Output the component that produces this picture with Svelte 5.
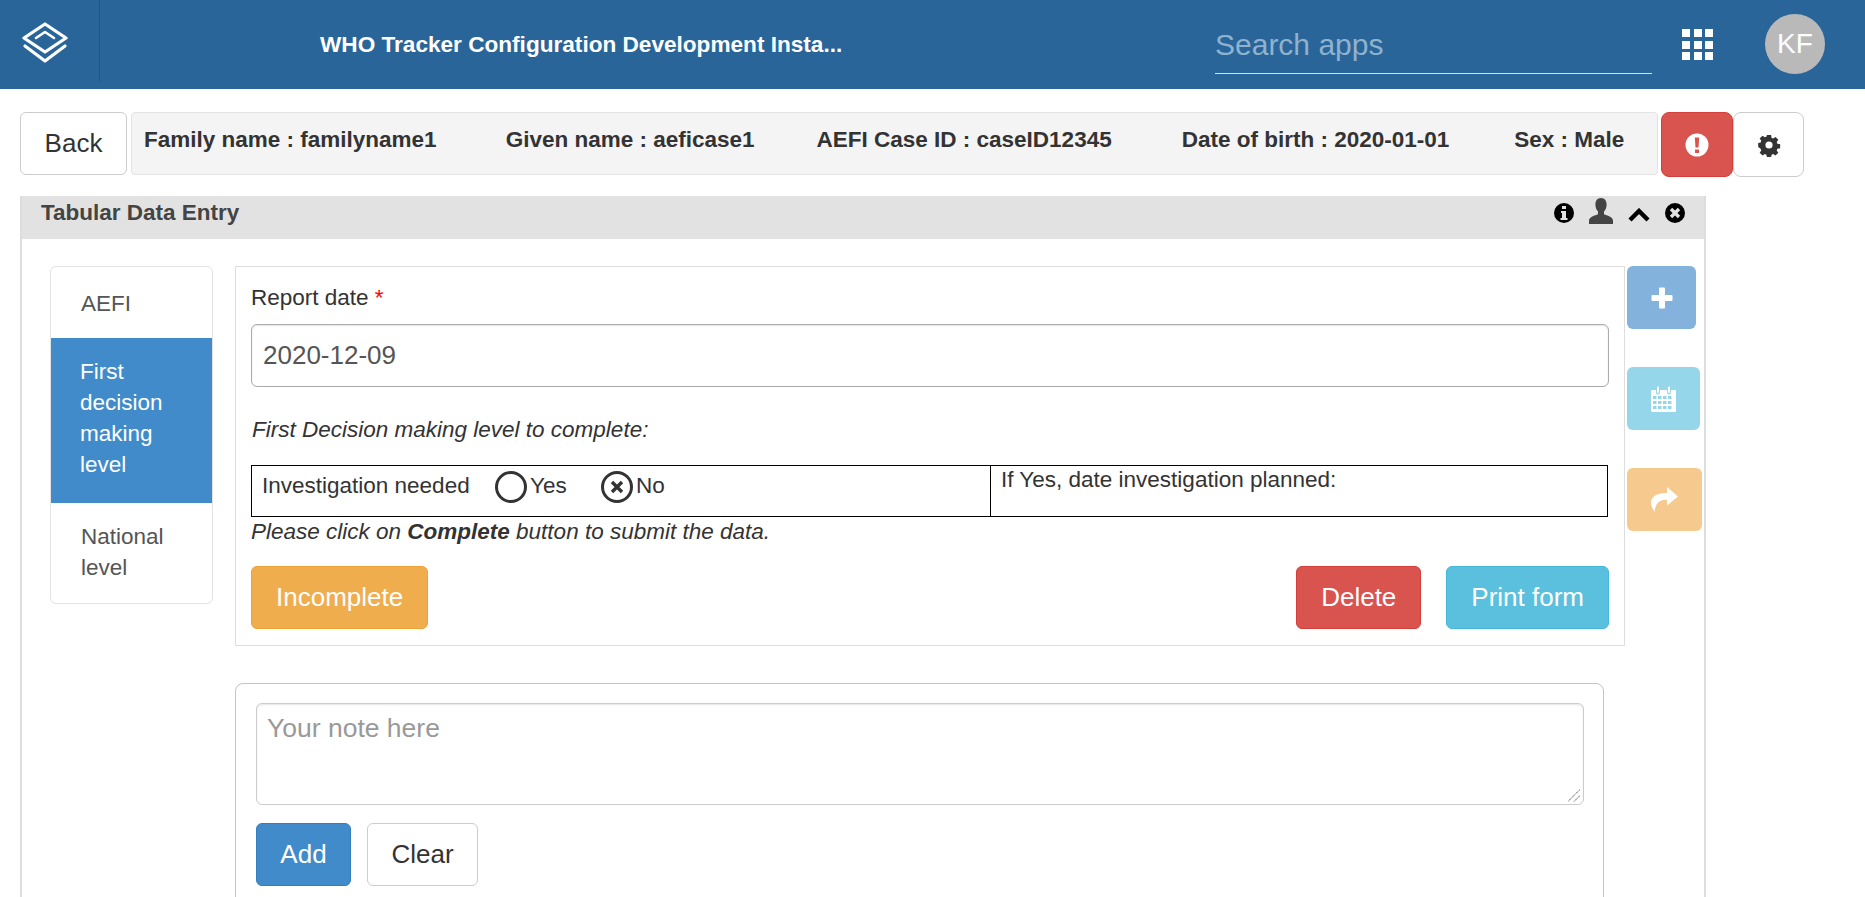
<script lang="ts">
	const patient = [
		{ label: 'Family name', value: 'familyname1' },
		{ label: 'Given name', value: 'aeficase1' },
		{ label: 'AEFI Case ID', value: 'caseID12345' },
		{ label: 'Date of birth', value: '2020-01-01' },
		{ label: 'Sex', value: 'Male' }
	];
	const stages = [
		{ name: 'AEFI', active: false },
		{ name: 'First decision making level', active: true },
		{ name: 'National level', active: false }
	];
</script>

<header class="topbar">
	<div class="logoCell">
		<svg class="logo" viewBox="0 0 46 41" fill="none" stroke="#fff" stroke-width="3.2" stroke-linejoin="round" stroke-linecap="round">
			<path d="M23 2 L44 16 L23 30 L2 16 Z" />
			<path d="M14 16 L23 10 L32 16" stroke-width="2.6" />
			<path d="M3 24 L23 39 L43 24" />
		</svg>
	</div>
	<div class="instance">WHO Tracker Configuration Development Insta...</div>
	<div class="search">Search apps</div>
	<div class="appsGrid">
		{#each Array(9) as _}
			<span></span>
		{/each}
	</div>
	<div class="avatar">KF</div>
</header>

<div class="patientRow">
	<button class="btn back">Back</button>
	<div class="patientBar">
		{#each patient as p}
			<span>{p.label} : {p.value}</span>
		{/each}
	</div>
	<button class="btn danger iconBtn" aria-label="warnings">
		<svg viewBox="0 0 24 24" width="24" height="24">
			<circle cx="12" cy="12" r="11.5" fill="#fff" />
			<path d="M9.8 4.5h4.4l-.7 10h-3z M10 16.5h4v3.4h-4z" fill="#d9534f" />
		</svg>
	</button>
	<button class="btn iconBtn gear" aria-label="settings">
		<svg viewBox="0 0 24 24" width="24" height="24">
			<path fill="#333" fill-rule="evenodd" d="M9.7 1h4.6l.6 3.1 1.7.7 2.6-1.8 3.2 3.2-1.8 2.6.7 1.7 3.1.6v4.6l-3.1.6-.7 1.7 1.8 2.6-3.2 3.2-2.6-1.8-1.7.7-.6 3.1H9.7l-.6-3.1-1.7-.7-2.6 1.8-3.2-3.2 1.8-2.6-.7-1.7L0 14.3V9.7l2.7-.6.7-1.7L1.6 4.8l3.2-3.2 2.6 1.8 1.7-.7z M12 8a4 4 0 1 0 0 8 4 4 0 0 0 0-8z" transform="translate(1.2 1.2) scale(.9)" />
		</svg>
	</button>
</div>

<section class="panel">
	<div class="panelHead">
		<span class="panelTitle">Tabular Data Entry</span>
		<div class="panelIcons">
			<svg viewBox="0 0 20 20" width="20" height="20">
				<circle cx="10" cy="10" r="10" fill="#000" />
				<path d="M8 3h4v3H8z M7 8h5v7h1.5v2h-7v-2H8v-5H7z" fill="#e2e2e2" />
			</svg>
			<svg class="person" viewBox="0 0 24 26" width="24" height="26">
				<path d="M12 0c3.6 0 5.6 2.8 5.6 6.4 0 3-1.2 5.6-2.6 7.2v2.6c3 1.2 9 2.6 9 6.4V26H0v-3.4c0-3.8 6-5.2 9-6.4v-2.6C7.600 12 6.400 9.400 6.400 6.400 6.400 2.800 8.400 0 12 0z" fill="#444" />
			</svg>
			<svg class="chev" viewBox="0 0 22 14" width="22" height="14">
				<path d="M2 12 L11 3 L20 12" fill="none" stroke="#000" stroke-width="4.400" />
			</svg>
			<svg viewBox="0 0 20 20" width="20" height="20">
				<circle cx="10" cy="10" r="10" fill="#000" />
				<path d="M6 6 L14 14 M14 6 L6 14" stroke="#e2e2e2" stroke-width="3.400" />
			</svg>
		</div>
	</div>

	<div class="panelBody">
		<nav class="stages">
			{#each stages as s}
				<div class="stage" class:active={s.active}>{s.name}</div>
			{/each}
		</nav>

		<div class="content">
			<div class="formRow">
				<div class="formBox">
					<div class="fieldLabel">Report date <span class="req">*</span></div>
					<div class="input">2020-12-09</div>
					<p class="hint">First Decision making level to complete:</p>
					<table>
						<tbody>
							<tr>
								<td class="left">
									<span class="q">Investigation needed</span>
									<span class="radio"></span><span class="opt">Yes</span>
									<span class="radio checked">
										<svg viewBox="0 0 14 14" width="14" height="14">
											<path d="M2 2 L12 12 M12 2 L2 12" stroke="#333" stroke-width="3.400" />
										</svg>
									</span><span class="opt">No</span>
								</td>
								<td class="right">If Yes, date investigation planned:</td>
							</tr>
						</tbody>
					</table>
					<p class="submitHint">Please click on <b>Complete</b> button to submit the data.</p>
					<div class="formActions">
						<button class="btn warning">Incomplete</button>
						<span class="spacer"></span>
						<button class="btn danger">Delete</button>
						<button class="btn info">Print form</button>
					</div>
				</div>

				<div class="sideActions">
					<button class="side plus" aria-label="add">
						<svg viewBox="0 0 22 22" width="22" height="22">
							<path d="M8 1.500a1 1 0 0 1 1-1h4a1 1 0 0 1 1 1V8h6.500a1 1 0 0 1 1 1v4a1 1 0 0 1-1 1H14v6.500a1 1 0 0 1-1 1H9a1 1 0 0 1-1-1V14H1.500a1 1 0 0 1-1-1V9a1 1 0 0 1 1-1H8z" fill="#fff" />
						</svg>
					</button>
					<button class="side cal" aria-label="schedule">
						<svg viewBox="0 0 25 26" width="25" height="26" fill="#fff">
							<path fill-rule="evenodd" d="M1 4h4v2.500a2 2 0 0 0 4 0V4h7v2.500a2 2 0 0 0 4 0V4h4a1 1 0 0 1 1 1v20a1 1 0 0 1-1 1H1a1 1 0 0 1-1-1V5a1 1 0 0 1 1-1z M2 10v3h3.500v-3z M7 10v3h3.500v-3z M12 10v3h3.500v-3z M17 10v3h3.500v-3z M2 15v3h3.500v-3z M7 15v3h3.500v-3z M12 15v3h3.500v-3z M17 15v3h3.500v-3z M2 20v3h3.500v-3z M7 20v3h3.500v-3z M12 20v3h3.500v-3z M17 20v3h3.500v-3z" />
							<path d="M6 1.500a1 1 0 0 1 2 0V6a1 1 0 0 1-2 0z M17 1.500a1 1 0 0 1 2 0V6a1 1 0 0 1-2 0z" />
						</svg>
					</button>
					<button class="side share" aria-label="refer">
						<svg viewBox="0 0 27 25" width="27" height="25">
							<path d="M16 0 L27 9.500 L16 18.500 V13 C9 12.500 5 15 3.500 24.500 C1 21 0 18 0 15.500 C0 9 7 6 16 6z" fill="#fff" />
						</svg>
					</button>
				</div>
			</div>

			<div class="notes">
				<div class="noteInput">
					<span class="placeholder">Your note here</span>
					<svg class="grip" viewBox="0 0 13 13" width="13" height="13">
						<path d="M0 12.500 L12 .5 M6 12.500 L12 6.500" stroke="#555" stroke-width="1" stroke-dasharray="1.400 .6" fill="none" />
					</svg>
				</div>
				<div class="noteActions">
					<button class="btn primary">Add</button>
					<button class="btn">Clear</button>
				</div>
			</div>
		</div>
	</div>
</section>

<style>
	:global(body) {
		margin: 0;
		height: 897px;
		overflow: hidden;
		background: #fff;
		font-family: 'Liberation Sans', Arial, sans-serif;
		color: #333;
	}

	.topbar {
		height: 89px;
		background: #296598;
		display: flex;
		align-items: flex-start;
		color: #fff;
		box-sizing: border-box;
	}

	.logoCell {
		width: 100px;
		height: 82px;
		box-sizing: border-box;
		border-right: 1px solid #22577f;
		padding: 22px 0 0 22px;
		flex: none;
	}

	.logo {
		width: 46px;
		height: 41px;
		display: block;
	}

	.instance {
		margin: 31px 0 0 220px;
		width: 895px;
		font-size: 22.600px;
		line-height: 28px;
		font-weight: 700;
		white-space: nowrap;
		flex: none;
	}

	.search {
		width: 437px;
		height: 57px;
		margin: 17px 0 0 0;
		flex: none;
		box-sizing: border-box;
		border-bottom: 1px solid #d6e2ec;
		font-size: 30px;
		line-height: 56px;
		color: #8fb2cf;
	}

	.appsGrid {
		width: 31px;
		margin: 29px 0 0 30px;
		flex: none;
		display: grid;
		grid-template-columns: repeat(3, 8px);
		grid-auto-rows: 8px;
		gap: 3.5px;
	}

	.appsGrid span {
		background: #fff;
	}

	.avatar {
		width: 60px;
		height: 60px;
		margin: 14px 0 0 52px;
		flex: none;
		border-radius: 50%;
		background: #b9b9b9;
		font-size: 28px;
		line-height: 60px;
		text-align: center;
	}

	.btn {
		font: inherit;
		font-size: 26px;
		line-height: 35px;
		height: 63px;
		padding: 0 24px;
		border: 1px solid #ccc;
		border-radius: 6px;
		background: #fff;
		color: #333;
		box-sizing: border-box;
	}

	.btn.primary {
		background: #428bca;
		border-color: #357ebd;
		color: #fff;
	}

	.btn.warning {
		background: #f0ad4e;
		border-color: #eea236;
		color: #fff;
	}

	.btn.danger {
		background: #d9534f;
		border-color: #d43f3a;
		color: #fff;
	}

	.btn.info {
		background: #5bc0de;
		border-color: #46b8da;
		color: #fff;
	}

	.patientRow {
		display: flex;
		align-items: flex-start;
		padding: 23px 0 0 20px;
		height: 107px;
		box-sizing: border-box;
	}

	.back {
		width: 107px;
		padding: 0;
		margin-right: 4px;
	}

	.patientBar {
		width: 1527px;
		height: 63px;
		box-sizing: border-box;
		background: #f4f4f4;
		border: 1px solid #e3e3e3;
		border-radius: 4px;
		margin-right: 3px;
		padding: 15px 0 0 12px;
		display: flex;
		font-size: 22.500px;
		line-height: 24px;
		font-weight: 700;
		white-space: nowrap;
	}

	.patientBar span:nth-child(1) {
		margin-right: 69px;
	}

	.patientBar span:nth-child(2) {
		margin-right: 62px;
	}

	.patientBar span:nth-child(3) {
		margin-right: 70px;
	}

	.patientBar span:nth-child(4) {
		margin-right: 65px;
	}

	.iconBtn {
		width: 72px;
		height: 65px;
		padding: 0;
		display: flex;
		align-items: center;
		justify-content: center;
		flex: none;
		border-radius: 8px;
	}

	.gear {
		width: 71px;
	}

	.panel {
		margin-left: 20px;
		width: 1686px;
		height: 701px;
		box-sizing: border-box;
		border: solid #ddd;
		border-width: 0 2px;
		overflow: hidden;
	}

	.panelHead {
		height: 43px;
		background: #e2e2e2;
		display: flex;
		align-items: center;
		justify-content: space-between;
		padding: 0 19px 0 19px;
	}

	.panelTitle {
		font-size: 22.500px;
		font-weight: 700;
		color: #444;
		margin-top: -10px;
	}

	.panelIcons {
		display: flex;
		align-items: center;
		gap: 15px;
		margin-top: -9px;
	}

	.person {
		margin-top: -5px;
	}

	.chev {
		margin-top: 4px;
	}

	.panelBody {
		display: flex;
		align-items: flex-start;
		padding: 27px 0 0 28px;
	}

	.stages {
		width: 163px;
		box-sizing: border-box;
		border: 1px solid #e3e3e3;
		border-radius: 6px;
		overflow: hidden;
		margin-right: 22px;
		flex: none;
	}

	.stage {
		padding: 21px 30px 12px 30px;
		font-size: 22.500px;
		line-height: 31px;
		color: #555;
	}

	.stage:first-child {
		height: 71px;
		box-sizing: border-box;
	}

	.stage.active {
		background: #428bca;
		color: #fff;
		margin: 0 -1px;
		padding: 18px 31px 23px 30px;
	}

	.stage:last-child {
		padding-top: 18px;
		padding-bottom: 20px;
	}

	.formRow {
		display: flex;
		align-items: flex-start;
	}

	.formBox {
		width: 1390px;
		height: 380px;
		box-sizing: border-box;
		border: 1px solid #ddd;
		padding: 17px 15px 0 15px;
		font-size: 22.500px;
		flex: none;
	}

	.fieldLabel {
		line-height: 28px;
		height: 40px;
	}

	.req {
		color: #f00;
	}

	.input {
		height: 63px;
		width: 1358px;
		box-sizing: border-box;
		border: 1px solid #aaa;
		border-radius: 6px;
		box-shadow: inset 0 1px 2px rgba(0, 0, 0, 0.1);
		padding: 0 11px;
		font-size: 26px;
		line-height: 61px;
		color: #555;
	}

	.hint {
		margin: 29px 0 0;
		height: 49px;
		line-height: 28px;
		font-style: italic;
		padding-left: 1px;
	}

	table {
		border-collapse: collapse;
		width: 1357px;
		height: 52px;
		table-layout: fixed;
		font-size: 22.500px;
	}

	td {
		border: 1px solid #000;
		padding: 0 10px;
		vertical-align: top;
	}

	td.left {
		width: 739px;
		box-sizing: border-box;
		line-height: 30px;
		padding-top: 5px;
		white-space: nowrap;
	}

	td.right {
		line-height: 28px;
		padding-top: 0;
	}

	.q {
		margin-right: 19px;
	}

	.radio {
		display: inline-flex;
		align-items: center;
		justify-content: center;
		width: 32px;
		height: 32px;
		box-sizing: border-box;
		border: 3px solid #333;
		border-radius: 50%;
		vertical-align: top;
		margin-right: 3px;
	}

	.opt {
		margin-right: 28px;
	}

	.submitHint {
		margin: 0;
		height: 49px;
		line-height: 30px;
		font-style: italic;
	}

	.formActions {
		display: flex;
		width: 1358px;
	}

	.spacer {
		flex: 1;
	}

	.formActions .danger {
		margin-right: 25px;
	}

	.sideActions {
		display: flex;
		flex-direction: column;
		gap: 38px;
		margin-left: 2px;
		align-items: flex-start;
	}

	.side {
		height: 63px;
		padding: 0;
		border: 0;
		border-radius: 6px;
		display: flex;
		align-items: center;
		justify-content: center;
	}

	.plus {
		width: 69px;
		background: #83b3dc;
	}

	.cal {
		width: 73px;
		background: #96d6eb;
	}

	.share {
		width: 75px;
		background: #f6ca8e;
	}

	.notes {
		width: 1369px;
		height: 300px;
		box-sizing: border-box;
		margin-top: 37px;
		border: 1px solid #c4c4c4;
		border-radius: 8px;
		padding: 19px 20px;
	}

	.noteInput {
		position: relative;
		height: 102px;
		width: 1328px;
		box-sizing: border-box;
		border: 1px solid #ccc;
		border-radius: 6px;
		box-shadow: inset 0 1px 2px rgba(0, 0, 0, 0.1);
		padding: 8px 10px;
		font-size: 26.500px;
		line-height: 32px;
		color: #999;
	}

	.grip {
		position: absolute;
		right: 2px;
		bottom: 2px;
	}

	.noteActions {
		display: flex;
		gap: 16px;
		margin-top: 18px;
	}

	.noteActions .btn {
		width: 95px;
		padding: 0;
	}

	.noteActions .btn:last-child {
		width: 111px;
	}
</style>
